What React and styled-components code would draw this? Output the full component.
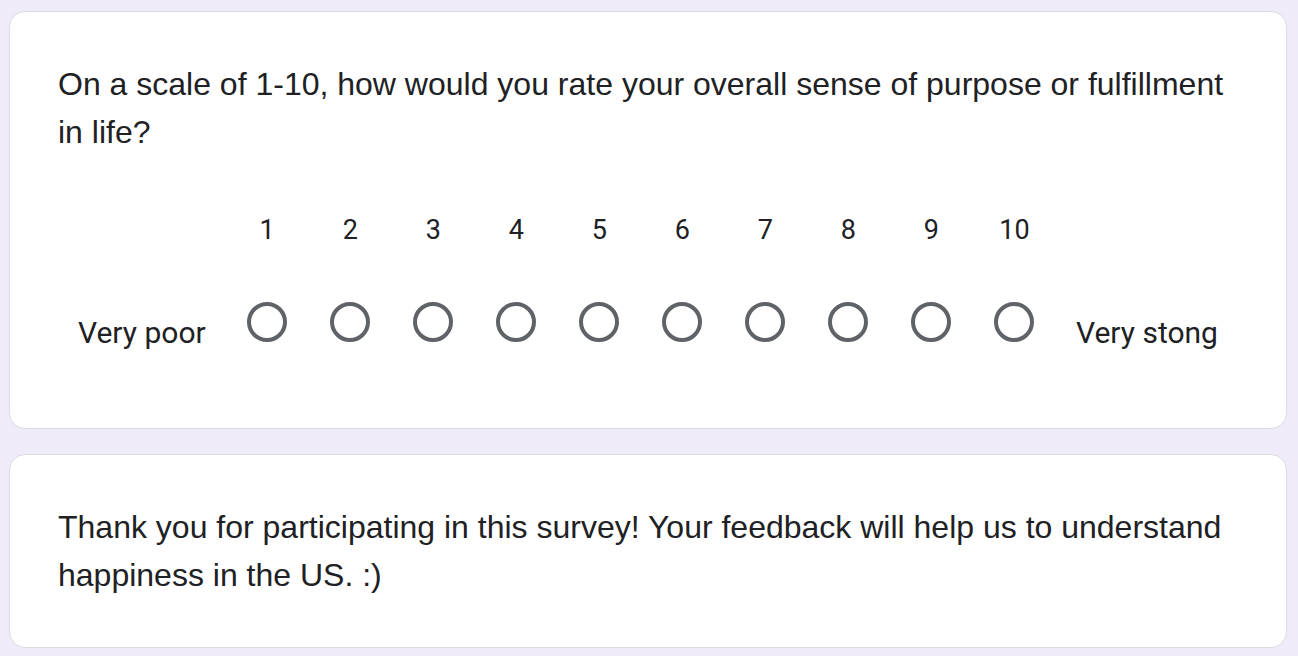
import styled, { createGlobalStyle } from 'styled-components';

const GlobalStyle = createGlobalStyle`
  html, body {
    margin: 0;
    padding: 0;
    background: #f0ebf8;
  }
  * {
    box-sizing: border-box;
  }
`;

const Page = styled.div`
  padding: 11px 11px 8px 9px;
  display: flex;
  flex-direction: column;
  gap: 25px;
`;

const Card = styled.div`
  background: #fff;
  border: 1px solid #dadce0;
  border-radius: 16px;
  padding: 48px 48px;
`;

const Question = styled.div`
  font-family: 'Liberation Sans', Arial, sans-serif;
  font-size: 32px;
  line-height: 48px;
  color: #202124;
`;

const Scale = styled.div`
  display: flex;
  align-items: flex-end;
  margin-top: 54px;
  padding-bottom: 27px;
  font-family: Roboto, 'Liberation Sans', sans-serif;
  color: #202124;
`;

const EndLabel = styled.div`
  flex: none;
  padding: 0 20px;
  font-size: 30px;
  line-height: 40px;
  white-space: nowrap;
`;

const Column = styled.label`
  flex: 1;
  display: flex;
  flex-direction: column;
  align-items: center;
  gap: 52px;
  padding-bottom: 11px;
`;

const Number = styled.div`
  font-size: 27px;
  line-height: 40px;
`;

const Radio = styled.div`
  width: 40px;
  height: 40px;
  border-radius: 50%;
  border: 4px solid #5f6368;
`;

const Message = styled(Question)``;

const values = [1, 2, 3, 4, 5, 6, 7, 8, 9, 10];

const App = () => {
  return (
    <Page>
      <GlobalStyle />
      <Card>
        <Question>
          On a scale of 1-10, how would you rate your overall sense of purpose or fulfillment in life?
        </Question>
        <Scale>
          <EndLabel>Very poor</EndLabel>
          {values.map((v) => (
            <Column key={v}>
              <Number>{v}</Number>
              <Radio />
            </Column>
          ))}
          <EndLabel>Very stong</EndLabel>
        </Scale>
      </Card>
      <Card>
        <Message>
          Thank you for participating in this survey! Your feedback will help us to understand happiness in the US. :)
        </Message>
      </Card>
    </Page>
  );
};

export default App;
